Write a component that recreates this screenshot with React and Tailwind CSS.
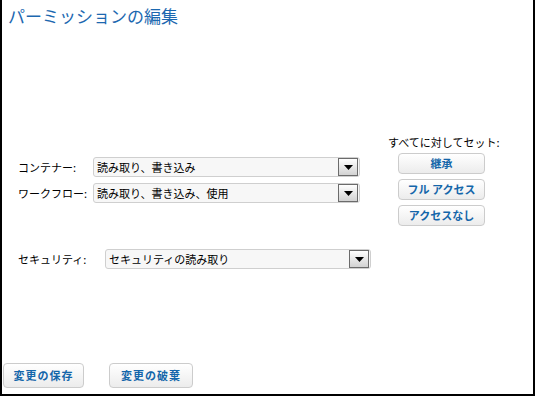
import React from 'react';

const font = { fontFamily: '"Noto Sans CJK JP", "Liberation Sans", sans-serif' };

function Select({ value, width }) {
  return (
    <div
      className={`${width} h-[20px] flex items-center justify-between rounded-[3px] border border-[#cfcfcf] bg-[#f7f7f7] pl-[3px] pr-[1px]`}
    >
      <span className="text-[11px] leading-[16px] text-black whitespace-nowrap">{value}</span>
      <span className="w-[20px] h-[18px] flex items-center justify-center border border-[#6b6b6b] bg-gradient-to-b from-white to-[#d2d2d2]">
        <svg width="9" height="5" viewBox="0 0 9 5">
          <path d="M0 0h9L4.5 5z" fill="#000" />
        </svg>
      </span>
    </div>
  );
}

function SmallButton({ children }) {
  return (
    <button className="w-[87px] h-[21px] rounded-[4px] border border-[#cccccc] bg-gradient-to-b from-white to-[#ececec] text-[11px] font-bold text-[#1466aa] leading-none">
      {children}
    </button>
  );
}

function BigButton({ children, width }) {
  return (
    <button
      className={`${width} h-[25px] rounded-[4px] border border-[#cccccc] bg-gradient-to-b from-white to-[#ececec] text-[11px] font-bold tracking-[1px] text-[#1466aa] leading-none`}
    >
      {children}
    </button>
  );
}

export default function App() {
  return (
    <div
      style={font}
      className="w-[535px] h-[396px] bg-white border-l-2 border-r-2 border-b-2 border-black flex flex-col"
    >
      {/* Title */}
      <h1 className="pl-[6px] pt-[6px] text-[17px] leading-[20px] text-[#1c68b0]">
        パーミッションの編集
      </h1>

      {/* Container / workflow + set-all */}
      <div className="flex mt-[109px]">
        <div className="pl-[16px] pt-[22px] flex flex-col gap-[6px]">
          <div className="flex items-center">
            <span className="w-[75px] text-[11px] leading-[16px] whitespace-nowrap">コンテナー:</span>
            <Select value="読み取り、書き込み" width="w-[267px]" />
          </div>
          <div className="flex items-center">
            <span className="w-[75px] text-[11px] leading-[16px] whitespace-nowrap">ワークフロー:</span>
            <Select value="読み取り、書き込み、使用" width="w-[267px]" />
          </div>
        </div>

        <div className="ml-[28px] flex flex-col">
          <span className="text-[11px] leading-[14px] whitespace-nowrap">すべてに対してセット:</span>
          <div className="mt-[4px] ml-[10px] flex flex-col gap-[5px]">
            <SmallButton>継承</SmallButton>
            <SmallButton>フル アクセス</SmallButton>
            <SmallButton>アクセスなし</SmallButton>
          </div>
        </div>
      </div>

      {/* Security */}
      <div className="flex items-center pl-[16px] mt-[23px]">
        <span className="w-[87px] text-[11px] leading-[16px] whitespace-nowrap">セキュリティ:</span>
        <Select value="セキュリティの読み取り" width="w-[266px]" />
      </div>

      {/* Footer buttons */}
      <div className="mt-auto pl-[1px] pb-[6px] flex gap-[25px]">
        <BigButton width="w-[81px]">変更の保存</BigButton>
        <BigButton width="w-[84px]">変更の破棄</BigButton>
      </div>
    </div>
  );
}
